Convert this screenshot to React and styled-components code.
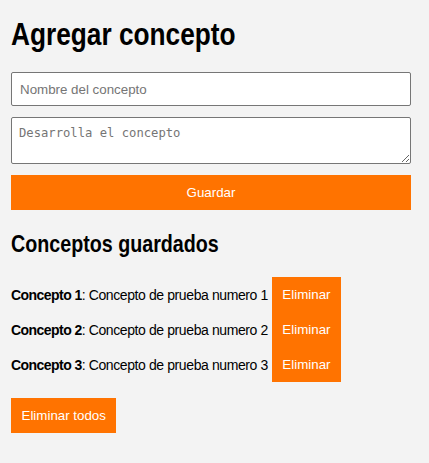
import styled, { createGlobalStyle } from 'styled-components';

const GlobalStyle = createGlobalStyle`
  html, body {
    margin: 0;
    padding: 0;
    background-color: #f3f3f3;
  }
  body {
    font-family: "Liberation Sans", Arial, sans-serif;
    font-size: 14px;
    color: #000;
  }
`;

const Page = styled.div`
  width: 400px;
  padding: 16px 0 30px 11px;
`;

// headings in the reference use a narrow bold face; squeeze Liberation Sans to match
const Title = styled.h1`
  margin: 0;
  font-family: "Liberation Sans Narrow", "Liberation Sans", sans-serif;
  font-size: 32px;
  line-height: 36px;
  font-weight: 700;
  transform: scaleX(0.82);
  transform-origin: left center;
`;

const Form = styled.form`
  display: flex;
  flex-direction: column;
  gap: 11px;
  margin-top: 20px;
`;

const Field = styled.input`
  box-sizing: border-box;
  width: 100%;
  height: 34px;
  margin: 0;
  padding: 0 8px;
  border: 1px solid #767676;
  border-radius: 2px;
  background: #fff;
  font-family: "Liberation Sans", Arial, sans-serif;
  font-size: 13.333px;

  &::placeholder {
    color: #757575;
  }
`;

const Area = styled.textarea`
  box-sizing: border-box;
  display: block;
  width: 100%;
  height: 47px;
  margin: 0;
  padding: 8px 7px;
  border: 1px solid #767676;
  border-radius: 2px;
  background: #fff;
  font-family: "DejaVu Sans Mono", "Liberation Mono", monospace;
  font-size: 12.2px;

  &::placeholder {
    color: #757575;
  }
`;

const Button = styled.button`
  box-sizing: border-box;
  height: 35px;
  width: ${(p) => (p.$full ? '100%' : 'auto')};
  margin: 0;
  padding: 0 10.5px;
  border: none;
  background-color: #ff7300;
  color: #fff;
  font-family: "Liberation Sans", Arial, sans-serif;
  font-size: 13.333px;
  letter-spacing: 0;
  cursor: pointer;
`;

const Subtitle = styled.h2`
  margin: 20px 0 0;
  font-family: "Liberation Sans Narrow", "Liberation Sans", sans-serif;
  font-size: 24px;
  line-height: 28px;
  font-weight: 700;
  transform: scaleX(0.82);
  transform-origin: left center;
`;

const List = styled.ul`
  list-style: none;
  margin: 19px 0 0;
  padding: 0;
`;

const Row = styled.li`
  display: flex;
  align-items: center;
  gap: 4px;
  height: 35px;
`;

const Text = styled.span`
  font-size: 14px;
  letter-spacing: -0.4px;
`;

const Name = styled.strong`
  font-weight: 700;
  letter-spacing: -0.55px;
`;

const Footer = styled.div`
  margin-top: 16px;
`;

const conceptos = [
  { id: 1, texto: 'Concepto de prueba numero 1' },
  { id: 2, texto: 'Concepto de prueba numero 2' },
  { id: 3, texto: 'Concepto de prueba numero 3' },
];

function App() {
  return (
    <Page>
      <GlobalStyle />
      <Title>Agregar concepto</Title>
      <Form onSubmit={(e) => e.preventDefault()}>
        <Field type="text" placeholder="Nombre del concepto" />
        <Area placeholder="Desarrolla el concepto" />
        <Button $full type="submit">Guardar</Button>
      </Form>
      <Subtitle>Conceptos guardados</Subtitle>
      <List>
        {conceptos.map((c) => (
          <Row key={c.id}>
            <Text>
              <Name>Concepto {c.id}</Name>: {c.texto}
            </Text>
            <Button type="button">Eliminar</Button>
          </Row>
        ))}
      </List>
      <Footer>
        <Button type="button">Eliminar todos</Button>
      </Footer>
    </Page>
  );
}

export default App;
